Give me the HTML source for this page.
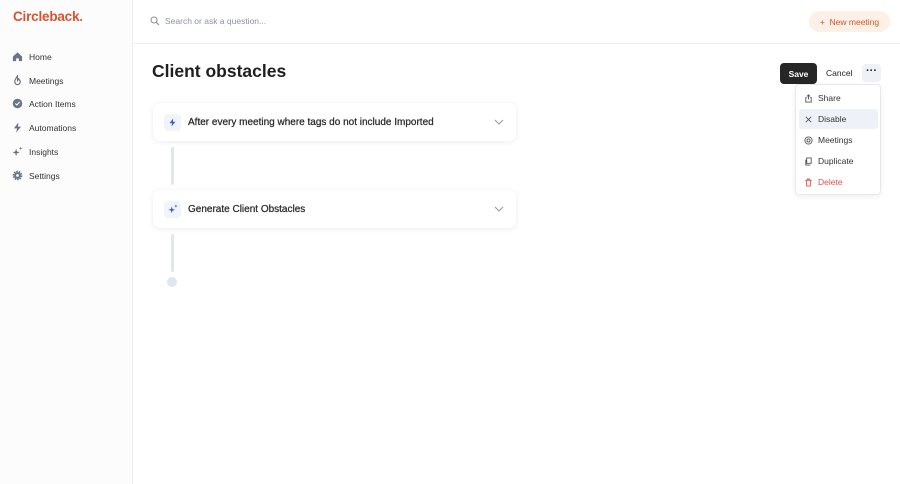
<!DOCTYPE html>
<html><head><style>
*{box-sizing:border-box;margin:0;padding:0}
body{width:900px;height:484px;background:#fff;font-family:"Liberation Sans",sans-serif;position:relative;overflow:hidden;color:#222}
.side{position:absolute;left:0;top:0;width:133px;height:484px;background:#fcfcfc;border-right:1px solid #ececec}
.logo{position:absolute;left:13px;top:9px;font-size:13.5px;font-weight:bold;color:#d9532f;letter-spacing:-.2px}
.logo span{color:#e86a3a}
.nav{position:absolute;left:12px;font-size:8.5px;color:#333;display:flex;align-items:center}
.nav svg{width:11px;height:11px;margin-right:6px}
.top{position:absolute;left:134px;top:0;right:0;height:44px;border-bottom:1px solid #ececec}
.search{position:absolute;left:150px;top:16px;font-size:8.5px;color:#8a93a3;display:flex;align-items:center}
.nm{position:absolute;left:809px;top:11px;width:81px;height:21px;border-radius:11px;background:#fdf0e6;color:#d9532f;font-size:8.5px;display:flex;align-items:center;justify-content:center}
h1{position:absolute;left:152px;top:61px;font-size:17.5px;font-weight:bold;color:#1f1f1f}
.card{position:absolute;left:153px;width:363px;height:38px;background:#fff;border-radius:7px;box-shadow:0 1px 6px rgba(0,0,0,.08);display:flex;align-items:center;font-size:10px;color:#2a2a2a;-webkit-text-stroke:.25px #2a2a2a}
.ic{width:17px;height:17px;background:#f1f4fb;border-radius:4px;margin:0 7px 0 11px;display:flex;align-items:center;justify-content:center}
.chev{position:absolute;right:12px;top:15px}
.line{position:absolute;left:171px;width:3px;background:#e2e7ef;border-radius:2px}
.save{position:absolute;left:780px;top:63px;width:37px;height:21px;background:#262626;color:#fff;border-radius:4px;font-size:8.5px;font-weight:bold;display:flex;align-items:center;justify-content:center}
.cancel{position:absolute;left:826px;top:68px;font-size:8.5px;color:#222}
.dots{position:absolute;left:862px;top:64px;width:19px;height:18px;background:#eef1f6;border-radius:4px;font-size:11px;font-weight:bold;text-align:center;line-height:14px}
.menu{position:absolute;left:795px;top:84px;width:86px;height:111px;background:#fff;border:1px solid #e8e8e8;border-radius:4px;box-shadow:0 2px 6px rgba(0,0,0,.06)}
.mi{position:absolute;left:3px;width:79px;height:20px;font-size:8.5px;display:flex;align-items:center;padding-left:19px;color:#333}
.mi svg{position:absolute;left:5px}
</style></head><body>
<div class="side">
<div class="logo">Circleback<span>.</span></div>
<div class="nav" style="top:51px"><svg viewBox="0 0 12 12"><path d="M1 6L6 1.5 11 6V11H7.5V8h-3v3H1z" fill="#6b7585"/></svg>Home</div>
<div class="nav" style="top:75px"><svg viewBox="0 0 12 12"><path d="M6 1C4 4 3 5 3 7.5a3 3 0 006 0C9 6 8 5 7 4 7 5 6 6 6 6z" fill="none" stroke="#6b7585" stroke-width="1.3"/></svg>Meetings</div>
<div class="nav" style="top:98px"><svg viewBox="0 0 12 12"><circle cx="6" cy="6" r="5.2" fill="#6b7585"/><path d="M3.6 6l1.7 1.6 3-3.2" stroke="#fff" stroke-width="1.2" fill="none"/></svg>Action Items</div>
<div class="nav" style="top:122px"><svg viewBox="0 0 12 12"><path d="M7 .5L2 7h3.5L4.5 11.5 10 5H6.5z" fill="#6b7585"/></svg>Automations</div>
<div class="nav" style="top:146px"><svg viewBox="0 0 12 12"><path d="M4.5 3l1 3 3 1-3 1-1 3-1-3-3-1 3-1z M9.5 .5l.5 1.5 1.5.5-1.5.5-.5 1.5-.5-1.5L7.5 2.5 9 2z" fill="#6b7585"/></svg>Insights</div>
<div class="nav" style="top:170px"><svg viewBox="0 0 12 12"><circle cx="6" cy="6" r="4" fill="none" stroke="#6b7585" stroke-width="2.6" stroke-dasharray="1.6 0.9"/><circle cx="6" cy="6" r="3.6" fill="#6b7585"/><circle cx="6" cy="6" r="1.5" fill="#fcfcfc"/></svg>Settings</div>
</div>
<div class="top"></div>
<div class="search"><svg width="10" height="10" viewBox="0 0 10 10" style="margin-right:5px"><circle cx="4" cy="4" r="3" fill="none" stroke="#8a93a3" stroke-width="1.1"/><path d="M6.3 6.3L9 9" stroke="#8a93a3" stroke-width="1.1"/></svg>Search or ask a question...</div>
<div class="nm">+&nbsp;&nbsp;New meeting</div>
<h1>Client obstacles</h1>
<div class="card" style="top:103px"><div class="ic"><svg width="9" height="9" viewBox="0 0 12 12"><path d="M7 .5L2 7h3.5L4.5 11.5 10 5H6.5z" fill="#3b5bd6"/></svg></div>After every meeting where tags do not include Imported<svg class="chev" width="10" height="8" viewBox="0 0 10 8"><path d="M1 2l4 4 4-4" stroke="#999" fill="none"/></svg></div>
<div class="line" style="top:147px;height:38px"></div>
<div class="card" style="top:190px"><div class="ic"><svg width="10" height="10" viewBox="0 0 12 12"><path d="M4.5 3l1 3 3 1-3 1-1 3-1-3-3-1 3-1z M9.5 .5l.5 1.5 1.5.5-1.5.5-.5 1.5-.5-1.5L7.5 2.5 9 2z" fill="#3b5bd6"/></svg></div>Generate Client Obstacles<svg class="chev" width="10" height="8" viewBox="0 0 10 8"><path d="M1 2l4 4 4-4" stroke="#999" fill="none"/></svg></div>
<div class="line" style="top:234px;height:38px"></div>
<div style="position:absolute;left:167px;top:277px;width:10px;height:10px;border-radius:50%;background:#e0e6f0"></div>
<div class="save">Save</div>
<div class="cancel">Cancel</div>
<div class="dots">···</div>
<div class="menu">
<div class="mi" style="top:3px"><svg width="9" height="9" viewBox="0 0 10 10"><path d="M3 4H2v5h6V4H7M5 6V1M3.3 2.7L5 1l1.7 1.7" stroke="#555" fill="none"/></svg>Share</div>
<div class="mi" style="top:24px;background:#eef2f8;border-radius:3px"><svg width="9" height="9" viewBox="0 0 10 10"><path d="M2 2l6 6M8 2L2 8" stroke="#555"/></svg>Disable</div>
<div class="mi" style="top:45px"><svg width="9" height="9" viewBox="0 0 10 10"><circle cx="5" cy="5" r="4" stroke="#555" fill="none"/><circle cx="5" cy="5" r="1.7" stroke="#555" fill="none"/></svg>Meetings</div>
<div class="mi" style="top:66px"><svg width="9" height="9" viewBox="0 0 10 10"><path d="M3 1h5v6H3zM2 3v6h5" stroke="#555" fill="none"/></svg>Duplicate</div>
<div class="mi" style="top:87px;color:#e0524a"><svg width="9" height="9" viewBox="0 0 10 10"><path d="M1.5 2.5h7M4 2.5V1h2v1.5M2.5 2.5l.5 6.5h4l.5-6.5" stroke="#e0524a" fill="none"/></svg>Delete</div>
</div>
</body></html>
